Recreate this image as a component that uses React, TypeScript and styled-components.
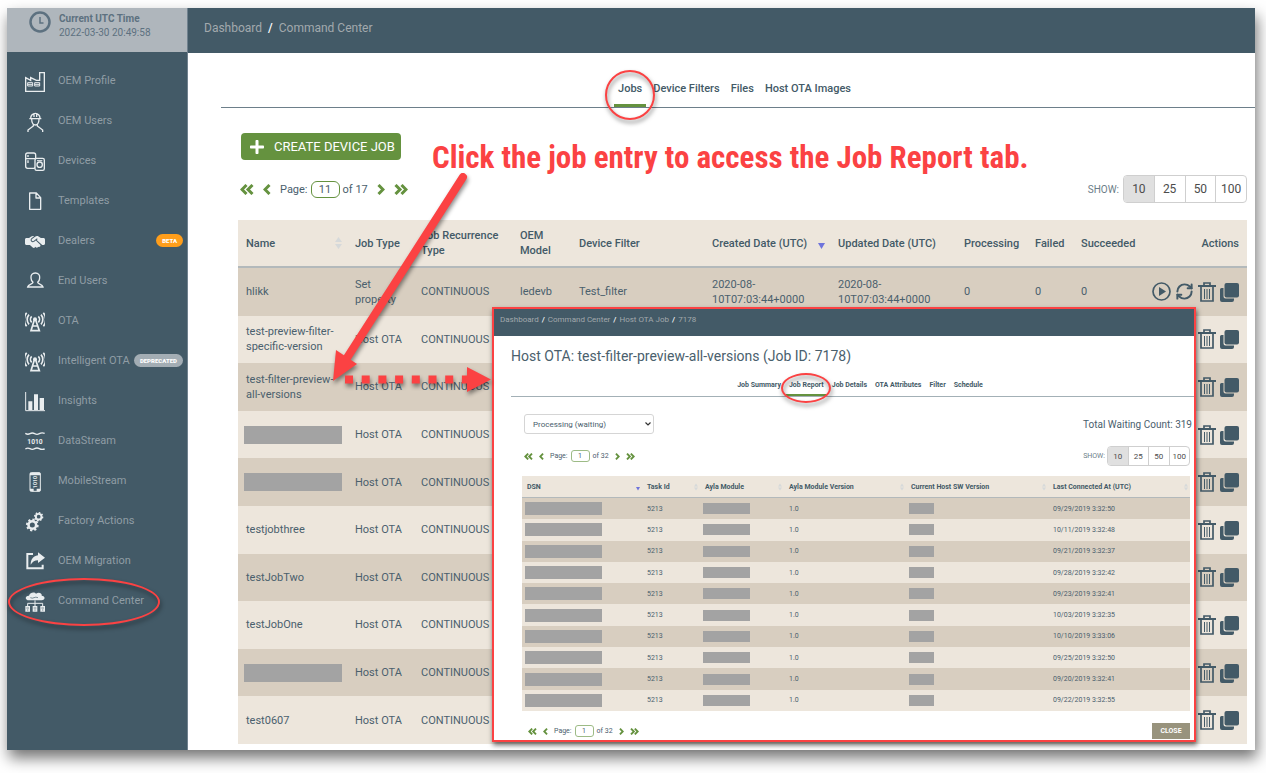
import React from "react";
import styled, { createGlobalStyle, css } from "styled-components";
import { RefreshCw } from "lucide-react";
import { FaPlus } from "react-icons/fa";
import { FaHandshakeSimple } from "react-icons/fa6";

const slate = "#435a67";
const ink = "#4a606d";
const green = "#65923f";
const red = "#fb4243";
const sand = "#ede6dc";
const sandDark = "#d8cec0";
const redacted = "#a3a3a3";

const GlobalStyle = createGlobalStyle`
  *, *::before, *::after { box-sizing: border-box; }
  body {
    margin: 0;
    background: #fff;
    color: ${ink};
    font-family: Roboto, "Liberation Sans", sans-serif;
    font-size: 11px;
    line-height: 15px;
    overflow-x: hidden;
  }
  a { color: inherit; text-decoration: none; }
  button, input, select { font: inherit; color: inherit; margin: 0; }
  button { border: 0; background: none; padding: 0; cursor: pointer; }
  svg { display: block; flex: none; }
`;

const Frame = styled.div`
  position: relative;
  display: flex;
  margin: 8px 11px 23px 7px;
  background: #fff;
  box-shadow: 2px 8px 14px rgba(0, 0, 0, 0.55);
`;

/* ---------- sidebar ---------- */

const Sidebar = styled.aside`
  flex: none;
  width: 181px;
  background: ${slate};
  border-right: 1px solid #71828f;
`;

const Clock = styled.div`
  display: flex;
  gap: 8px;
  height: 44px;
  padding: 3px 0 0 22px;
  background: #afb6bc;
  color: #5d7180;
  font-size: 10px;
  line-height: 14px;
`;

const ClockText = styled.div`
  padding-top: 1px;
`;

const ClockTitle = styled.div`
  font-weight: 700;
`;

const Nav = styled.nav`
  display: flex;
  flex-direction: column;
  padding-top: 8px;
`;

const NavLink = styled.a`
  position: relative;
  display: flex;
  align-items: center;
  height: 40px;
  padding: 0 4px 0 18px;
  color: #909da5;
`;

const NavIcon = styled.span`
  width: 20px;
  margin-right: 13px;
  padding-top: 3px;
  color: #e9edef;
`;

const Badge = styled.span<{ $color: string }>`
  margin-left: auto;
  padding: 0 6px;
  border-radius: 7px;
  background: ${(p) => p.$color};
  color: #fff;
  font-size: 6px;
  font-weight: 900;
  line-height: 13px;
`;

/* ---------- shared pieces ---------- */

const TopBar = styled.header<{ $small?: boolean }>`
  display: flex;
  align-items: ${(p) => (p.$small ? "flex-start" : "center")};
  gap: ${(p) => (p.$small ? 3 : 6)}px;
  height: ${(p) => (p.$small ? 27 : 45)}px;
  padding: ${(p) => (p.$small ? "6px 6px 0" : "0 16px 5px")};
  background: ${slate};
  color: #a2a9ad;
  font-size: ${(p) => (p.$small ? 8 : 12)}px;
  line-height: ${(p) => (p.$small ? 10 : 16)}px;
  i { color: #fff; font-style: normal; font-weight: 500; }
`;

const TabBar = styled.nav<{ $small?: boolean }>`
  display: flex;
  justify-content: center;
  align-items: flex-end;
  gap: ${(p) => (p.$small ? 2 : 3)}px;
  height: ${(p) => (p.$small ? 31 : 55)}px;
  margin-left: ${(p) => (p.$small ? 17 : 33)}px;
  padding: ${(p) => (p.$small ? "0 0 0 15px" : "0 7px 0 0")};
  border-bottom: 1px solid ${(p) => (p.$small ? "#a3b0b6" : "#6d7f8a")};
`;

const Tab = styled.a<{ $small?: boolean; $active?: boolean }>`
  position: relative;
  padding: ${(p) => (p.$small ? "0 3px 4px" : "0 4px 7px")};
  border-bottom: ${(p) => (p.$small ? 2 : 3)}px solid ${(p) => (p.$active ? green : "transparent")};
  color: ${slate};
  font-size: ${(p) => (p.$small ? 7 : 11)}px;
  font-weight: ${(p) => (p.$small ? 700 : 500)};
  line-height: ${(p) => (p.$small ? 10 : 16)}px;
  white-space: nowrap;
`;

const Pager = styled.div<{ $small?: boolean }>`
  display: flex;
  align-items: center;
  gap: ${(p) => (p.$small ? 6 : 9)}px;
  font-size: ${(p) => (p.$small ? 7 : 11)}px;
  color: ${ink};
  button { color: ${green}; }
`;

const PageLabel = styled.label<{ $small?: boolean }>`
  display: flex;
  align-items: center;
  gap: ${(p) => (p.$small ? 3 : 3)}px;
  input {
    width: ${(p) => (p.$small ? 19 : 29)}px;
    height: ${(p) => (p.$small ? 12 : 17)}px;
    padding: 0;
    border: 1px solid ${(p) => (p.$small ? "#9dbb86" : green)};
    border-radius: ${(p) => (p.$small ? 3 : 6)}px;
    background: #fff;
    text-align: center;
    outline: 0;
  }
`;

const SizePicker = styled.div<{ $small?: boolean }>`
  display: flex;
  align-items: center;
  gap: ${(p) => (p.$small ? 2 : 4)}px;
  margin-left: auto;
  font-size: ${(p) => (p.$small ? 7 : 10)}px;
  color: #6b7d88;
`;

const SizeGroup = styled.div<{ $small?: boolean }>`
  display: flex;
  width: ${(p) => (p.$small ? 83 : 124)}px;
  border: 1px solid #cfcfcf;
  border-radius: 4px;
  overflow: hidden;
  button {
    flex: 1;
    height: ${(p) => (p.$small ? 18 : 26)}px;
    font-size: ${(p) => (p.$small ? 8 : 12)}px;
    color: #4c4c4c;
  }
  button + button { border-left: 1px solid #cfcfcf; }
  button[aria-pressed="true"] { background: #e0e0e0; }
`;

const Sheet = styled.table<{ $small?: boolean }>`
  width: 100%;
  height: ${(p) => (p.$small ? 235 : 524)}px;
  table-layout: fixed;
  border-collapse: separate;
  border-spacing: 0;
  font-size: ${(p) => (p.$small ? 7 : 11)}px;
  line-height: ${(p) => (p.$small ? 10 : 15)}px;
  tr { height: ${(p) => (p.$small ? 21 : 47)}px; }
  thead tr { height: ${(p) => (p.$small ? 22 : 48)}px; }
  th, td {
    padding: 0 ${(p) => (p.$small ? 5 : 8)}px;
    text-align: left;
    vertical-align: middle;
  }
  th {
    height: ${(p) => (p.$small ? 22 : 48)}px;
    background: ${sand};
    border-bottom: ${(p) => (p.$small ? 1 : 2)}px solid #b3b9bb;
    color: ${slate};
    font-weight: ${(p) => (p.$small ? 700 : 500)};
  }
  tbody tr { background: ${sand}; }
  tbody tr:nth-child(odd) { background: ${sandDark}; }
`;

const HeadCell = styled.div<{ $end?: boolean }>`
  display: flex;
  align-items: center;
  justify-content: ${(p) => (p.$end ? "flex-end" : "space-between")};
  svg { margin-right: -3px; }
`;

const Redacted = styled.span<{ $w: number; $h: number }>`
  display: block;
  width: ${(p) => p.$w}px;
  height: ${(p) => p.$h}px;
  margin-left: -2px;
  background: ${redacted};
`;

/* ---------- main panel ---------- */

const Main = styled.main`
  flex: 1;
  min-width: 0;
`;

const Content = styled.section`
  display: flex;
  flex-direction: column;
  padding: 25px 8px 6px 50px;
`;

const CreateButton = styled.button`
  display: flex;
  align-items: center;
  gap: 9px;
  align-self: flex-start;
  height: 27px;
  margin-left: 3px;
  padding: 0 6px 0 8px;
  border-radius: 4px;
  background: ${green};
  color: #fff;
  font-size: 13px;
`;

const ControlRow = styled.div`
  display: flex;
  align-items: center;
  margin: 15px 0 17px;
  padding-left: 2px;
`;

const Actions = styled.div`
  display: flex;
  justify-content: flex-end;
  align-items: center;
  gap: 4px;
  color: ${slate};
`;

/* ---------- report window ---------- */

const Report = styled.section`
  position: absolute;
  top: 299px;
  left: 485px;
  right: 59px;
  border: 2px solid ${red};
  background: #fff;
  box-shadow: 1px 3px 5px rgba(0, 0, 0, 0.6);
`;

const ReportTitle = styled.h1`
  margin: 10px 0 0 17px;
  font-size: 14px;
  font-weight: 400;
  line-height: 20px;
`;

const ReportBody = styled.div`
  padding: 17px 4px 1px 28px;
`;

const FilterRow = styled.div`
  display: flex;
  justify-content: space-between;
  align-items: center;
  margin-right: -2px;
  padding-left: 2px;
  font-size: 10px;
`;

const StatusSelect = styled.div`
  position: relative;
  select {
    width: 130px;
    height: 20px;
    padding: 0 8px;
    appearance: none;
    border: 1px solid #d5d5d5;
    border-radius: 3px;
    background: #fff;
    font-size: 8px;
    outline: 0;
  }
  svg {
    position: absolute;
    top: 8px;
    right: 3px;
    pointer-events: none;
  }
`;

const ReportControls = styled.div`
  display: flex;
  align-items: center;
  margin: 12px 0 10px;
  padding-left: 2px;
`;

const ReportFooter = styled.footer`
  display: flex;
  align-items: center;
  justify-content: space-between;
  padding: 12px 0 0 6px;
`;

const CloseButton = styled.button`
  width: 38px;
  height: 16px;
  background: #98937d;
  color: #fff;
  font-size: 7px;
  font-weight: 700;
  line-height: 16px;
`;

/* ---------- annotations ---------- */

const Ring = styled.span<{ $w: number; $h: number; $dx?: number; $dy?: number }>`
  position: absolute;
  z-index: 2;
  top: 50%;
  left: 50%;
  width: ${(p) => p.$w}px;
  height: ${(p) => p.$h}px;
  margin: ${(p) => (p.$dy ?? 0) - p.$h / 2}px 0 0 ${(p) => (p.$dx ?? 0) - p.$w / 2}px;
  border: 2px solid ${red};
  border-radius: 50%;
  pointer-events: none;
  filter: drop-shadow(1px 3px 2px rgba(0, 0, 0, 0.5));
`;

const overlay = css`
  position: absolute;
  pointer-events: none;
`;

const Callout = styled.p`
  ${overlay}
  top: 132px;
  left: 425px;
  margin: 0;
  color: ${red};
  font-family: "Roboto Condensed", "Liberation Sans Narrow", Roboto, sans-serif;
  font-size: 31px;
  font-weight: 700;
  line-height: 36px;
  white-space: nowrap;
`;

const Arrows = styled.svg`
  ${overlay}
  top: 152px;
  left: 313px;
  filter: drop-shadow(1px 3px 2px rgba(0, 0, 0, 0.45));
`;

/* ---------- icons ---------- */

const Glyph = ({ children }: { children: React.ReactNode }) => (
  <svg width="20" height="20" viewBox="0 0 60 60" fill="none" stroke="currentColor" strokeWidth="4" aria-hidden="true">
    {children}
  </svg>
);

const Tower = () => (
  <Glyph>
    <circle cx="30" cy="22" r="6" fill="currentColor" stroke="none" />
    <path
      d="M20 13a13 13 0 0 0 0 18M40 13a13 13 0 0 1 0 18M12 8a22 22 0 0 0 0 29M48 8a22 22 0 0 1 0 29M5 2a32 32 0 0 0 0 41M55 2a32 32 0 0 1 0 41"
      strokeWidth="5"
    />
    <path d="M28 24L18 56H43L32 24M23 42H38" strokeWidth="5" />
  </Glyph>
);

const Gear = ({ x, y, r }: { x: number; y: number; r: number }) => (
  <g transform={`translate(${x} ${y})`}>
    <circle r={r * 0.6} strokeWidth={r * 0.4} />
    {[0, 45, 90, 135, 180, 225, 270, 315].map((a) => (
      <path key={a} d={`M0 ${-r * 0.7}V${-r}`} strokeWidth={r * 0.36} transform={`rotate(${a + 12})`} />
    ))}
  </g>
);

const icons: Record<string, React.ReactNode> = {
  factory: (
    <Glyph>
      <path d="M2 58V17L17 25V17L34 25H44V2H58V58Z" />
      <path d="M8 32H23V42H8ZM29 32H44V42H29ZM8 37H23M29 37H44" strokeWidth="3" />
    </Glyph>
  ),
  worker: (
    <Glyph>
      <path d="M17 19a14 15 0 0 1 28 0M13 20H49M27 5V15M35 5V15M20 22c0 10 5 17 11 17s11-7 11-17" />
      <path d="M25 37V42L9 54V60M37 37V42L53 54V60" />
    </Glyph>
  ),
  devices: (
    <Glyph>
      <rect x="2" y="3" width="30" height="46" rx="6" />
      <path d="M2 20H32M9 9V15M9 25V33" />
      <rect x="30" y="19" width="28" height="36" rx="5" fill={slate} />
      <circle cx="44" cy="38" r="8" />
      <path d="M36 26H52" strokeWidth="3" />
    </Glyph>
  ),
  file: (
    <Glyph>
      <path d="M14 3H34L47 17V52H14ZM33 3V18H47" strokeLinejoin="round" />
    </Glyph>
  ),
  handshake: <FaHandshakeSimple size={20} />,
  person: (
    <Glyph>
      <path d="M31 3c-9 0-14 6-13 15 0 6 3 10 6 13 0 6-14 5-16 14H54c-2-9-16-8-16-14 3-3 6-7 6-13 1-9-4-15-13-15z" />
    </Glyph>
  ),
  tower: <Tower />,
  bars: (
    <Glyph>
      <path d="M2 0V56H60" strokeWidth="3" />
      <path d="M10 28H22V54H10ZM27 7H39V54H27ZM44 18H57V54H44Z" fill="currentColor" stroke="none" />
    </Glyph>
  ),
  stream: (
    <Glyph>
      <path d="M1 4q7 5 14 1t14 0 14 0 16-1M1 51q7-5 14-1t14 0 14 0 16 1" />
      <text x="30" y="35" fontSize="20" fontWeight="700" fill="currentColor" stroke="none" textAnchor="middle">
        1010
      </text>
    </Glyph>
  ),
  mobile: (
    <Glyph>
      <rect x="15" y="2" width="31" height="56" rx="4" strokeWidth="3" />
      <path d="M15 6H46M15 54H26M35 54H46" strokeWidth="7" />
      <text
        x="30"
        y="36"
        fontSize="16"
        fontWeight="700"
        fill="currentColor"
        stroke="none"
        textAnchor="middle"
        transform="rotate(-90 30 30)"
      >
        1010
      </text>
    </Glyph>
  ),
  cogs: (
    <Glyph>
      <Gear x={22} y={39} r={19} />
      <Gear x={41} y={14} r={14} />
    </Glyph>
  ),
  share: (
    <Glyph>
      <path d="M24 6H7V49H53V38" strokeWidth="6" />
      <path d="M60 17L39 1V10C22 12 17 26 17 38 23 29 29 25 39 25V33Z" fill="currentColor" stroke="none" />
    </Glyph>
  ),
  cloud: (
    <Glyph>
      <path
        d="M12 25C-2 24 0 10 12 11 15 0 29-1 33 5 42-1 52 4 50 11 62 12 61 25 50 25Z"
        fill="currentColor"
        stroke="none"
      />
      <path d="M30 25V42M8 42V34H53V42" strokeWidth="3" />
      <path d="M1 42H15V59H1ZM23 42H37V59H23ZM46 42H60V59H46Z" fill="currentColor" stroke="none" />
      <path d="M4 48H12M26 48H34M49 48H57M6 54H10M28 54H32M51 54H55" stroke={slate} strokeWidth="2" />
      <path d="M16 17q6 3 11 0t12 0" stroke={slate} strokeWidth="2" />
    </Glyph>
  ),
};

const Chevron = ({ small, double, next }: { small?: boolean; double?: boolean; next?: boolean }) => {
  const h = small ? 7 : 11;
  const w = Math.round((h * (double ? 14 : 8)) / 11);
  return (
    <svg width={w} height={h} viewBox={`0 0 ${double ? 14 : 8} 11`} fill="none" stroke="currentColor" strokeWidth="3">
      <g transform={next ? `translate(${double ? 14 : 8} 0) scale(-1 1)` : undefined}>
        <path d="M6.500 1L2 5.500L6.500 10" />
        {double && <path d="M12.500 1L8 5.500L12.500 10" />}
      </g>
    </svg>
  );
};

const SortMark = ({ small, active }: { small?: boolean; active?: boolean }) => (
  <svg width={small ? 4 : 7} height={small ? 8 : 12} viewBox="0 0 7 12" overflow="visible">
    {active ? (
      <path d="M0 6H7L3.500 12Z" fill="#6f74dc" />
    ) : (
      <path d="M0 5H7L3.500 0ZM0 7H7L3.500 12Z" fill="#d6d9da" />
    )}
  </svg>
);

const PlayIcon = () => (
  <svg width="19" height="20" viewBox="0 0 19 20" fill="none" stroke="currentColor">
    <circle cx="9.500" cy="9.500" r="8.500" strokeWidth="1.700" />
    <path d="M7 5L14 9.500L7 14Z" fill="currentColor" stroke="none" />
  </svg>
);

const TrashIcon = () => (
  <svg width="18" height="20" viewBox="0 0 18 20" fill="none" stroke="currentColor">
    <path d="M0 4H18" strokeWidth="2" />
    <path d="M6 3V1H12V3M3 5V19H15V5" strokeWidth="1.700" />
    <path d="M6.500 7V17M9 7V17M11.500 7V17" />
  </svg>
);

const CopyIcon = () => (
  <svg width="19" height="20" viewBox="0 0 19 20" fill="currentColor">
    <path d="M3.500 6H1.500Q0 6 0 7.500V18Q0 20 2 20H12Q14 20 14 18V16.500H5.500Q3.500 16.500 3.500 14.500Z" />
    <rect x="4.500" y="1" width="14.500" height="14.500" rx="2" />
  </svg>
);

/* ---------- data ---------- */

const navItems: { label: string; icon: string; badge?: string; color?: string; ring?: boolean }[] = [
  { label: "OEM Profile", icon: "factory" },
  { label: "OEM Users", icon: "worker" },
  { label: "Devices", icon: "devices" },
  { label: "Templates", icon: "file" },
  { label: "Dealers", icon: "handshake", badge: "BETA", color: "#ff9e1b" },
  { label: "End Users", icon: "person" },
  { label: "OTA", icon: "tower" },
  { label: "Intelligent OTA", icon: "tower", badge: "DEPRECATED", color: "#a3adb4" },
  { label: "Insights", icon: "bars" },
  { label: "DataStream", icon: "stream" },
  { label: "MobileStream", icon: "mobile" },
  { label: "Factory Actions", icon: "cogs" },
  { label: "OEM Migration", icon: "share" },
  { label: "Command Center", icon: "cloud", ring: true },
];

const jobColumns: { label: string; width?: number; sort?: "idle" | "active"; end?: boolean }[] = [
  { label: "Name", width: 109, sort: "idle" },
  { label: "Job Type", width: 66 },
  { label: "Job Recurrence Type", width: 99 },
  { label: "OEM Model", width: 59 },
  { label: "Device Filter" },
  { label: "Created Date (UTC)", width: 126, sort: "active" },
  { label: "Updated Date (UTC)", width: 126 },
  { label: "Processing", width: 71 },
  { label: "Failed", width: 46 },
  { label: "Succeeded", width: 70 },
  { label: "Actions", width: 104, end: true },
];

const stamp = "2020-08-10T07:03:44+0000";
const jobs: (string | null)[] = [
  "hlikk",
  "test-preview-filter-specific-version",
  "test-filter-preview-all-versions",
  null,
  null,
  "testjobthree",
  "testJobTwo",
  "testJobOne",
  null,
  "test0607",
];

const reportColumns: { label: string; width?: number; sort: "idle" | "active" }[] = [
  { label: "DSN", width: 120, sort: "active" },
  { label: "Task Id", width: 58, sort: "idle" },
  { label: "Ayla Module", width: 84, sort: "idle" },
  { label: "Ayla Module Version", width: 122, sort: "idle" },
  { label: "Current Host SW Version", width: 142, sort: "idle" },
  { label: "Last Connected At (UTC)", sort: "idle" },
];

const connected = [
  "09/29/2019 3:32:50",
  "10/11/2019 3:32:48",
  "09/21/2019 3:32:37",
  "09/28/2019 3:32:42",
  "09/23/2019 3:32:41",
  "10/03/2019 3:32:35",
  "10/10/2019 3:33:06",
  "09/25/2019 3:32:50",
  "09/20/2019 3:32:41",
  "09/22/2019 3:32:55",
];

/* ---------- composed pieces ---------- */

const Crumbs = ({ items, small }: { items: string[]; small?: boolean }) => (
  <TopBar $small={small}>
    {items.map((item, i) => (
      <React.Fragment key={item}>
        {i > 0 && <i>/</i>}
        <a href="#">{item}</a>
      </React.Fragment>
    ))}
  </TopBar>
);

const PageNav = ({ page, total, small }: { page: number; total: number; small?: boolean }) => (
  <Pager $small={small}>
    <button aria-label="First page"><Chevron small={small} double /></button>
    <button aria-label="Previous page"><Chevron small={small} /></button>
    <PageLabel $small={small}>
      Page:
      <input type="text" defaultValue={page} />
      of {total}
    </PageLabel>
    <button aria-label="Next page"><Chevron small={small} next /></button>
    <button aria-label="Last page"><Chevron small={small} double next /></button>
  </Pager>
);

const PageSize = ({ small }: { small?: boolean }) => (
  <SizePicker $small={small}>
    SHOW:
    <SizeGroup $small={small}>
      {[10, 25, 50, 100].map((n) => (
        <button key={n} aria-pressed={n === 10}>{n}</button>
      ))}
    </SizeGroup>
  </SizePicker>
);

const JobReport = () => (
  <Report>
    <Crumbs small items={["Dashboard", "Command Center", "Host OTA Job", "7178"]} />
    <ReportTitle>Host OTA: test-filter-preview-all-versions (Job ID: 7178)</ReportTitle>
    <TabBar $small>
      {["Job Summary", "Job Report", "Job Details", "OTA Attributes", "Filter", "Schedule"].map((t) => (
        <Tab key={t} href="#" $small $active={t === "Job Report"}>
          {t}
          {t === "Job Report" && <Ring $w={50} $h={30} $dy={1} />}
        </Tab>
      ))}
    </TabBar>
    <ReportBody>
      <FilterRow>
        <StatusSelect>
          <select aria-label="Status" defaultValue="waiting">
            <option value="waiting">Processing (waiting)</option>
          </select>
          <svg width="6" height="4" viewBox="0 0 6 4" fill="none" stroke="#333">
            <path d="M0.500 0.500L3 3L5.500 0.500" strokeWidth="1.200" />
          </svg>
        </StatusSelect>
        <span>Total Waiting Count: 319</span>
      </FilterRow>
      <ReportControls>
        <PageNav small page={1} total={32} />
        <PageSize small />
      </ReportControls>
      <Sheet $small>
        <colgroup>
          {reportColumns.map((c) => <col key={c.label} width={c.width} />)}
        </colgroup>
        <thead>
          <tr>
            {reportColumns.map((c) => (
              <th key={c.label}>
                <HeadCell>{c.label}<SortMark small active={c.sort === "active"} /></HeadCell>
              </th>
            ))}
          </tr>
        </thead>
        <tbody>
          {connected.map((date) => (
            <tr key={date}>
              <td><Redacted $w={77} $h={13} /></td>
              <td>5213</td>
              <td><Redacted $w={47} $h={11} /></td>
              <td>1.0</td>
              <td><Redacted $w={25} $h={11} /></td>
              <td>{date}</td>
            </tr>
          ))}
        </tbody>
      </Sheet>
      <ReportFooter>
        <PageNav small page={1} total={32} />
        <CloseButton>CLOSE</CloseButton>
      </ReportFooter>
    </ReportBody>
  </Report>
);

export default function App() {
  return (
    <>
      <GlobalStyle />
      <Frame>
        <Sidebar>
          <Clock>
            <svg width="22" height="22" viewBox="0 0 22 22" fill="none" stroke="currentColor">
              <circle cx="11" cy="11" r="9.500" strokeWidth="2.500" />
              <path d="M11 6V12H14.500" strokeWidth="1.500" />
            </svg>
            <ClockText>
              <ClockTitle>Current UTC Time</ClockTitle>
              2022-03-30 20:49:58
            </ClockText>
          </Clock>
          <Nav>
            {navItems.map((n) => (
              <NavLink key={n.label} href="#">
                <NavIcon>{icons[n.icon]}</NavIcon>
                {n.label}
                {n.badge && <Badge $color={n.color!}>{n.badge}</Badge>}
                {n.ring && <Ring $w={152} $h={48} $dx={-13} $dy={2} />}
              </NavLink>
            ))}
          </Nav>
        </Sidebar>
        <Main>
          <Crumbs items={["Dashboard", "Command Center"]} />
          <TabBar>
            {["Jobs", "Device Filters", "Files", "Host OTA Images"].map((t) => (
              <Tab key={t} href="#" $active={t === "Jobs"}>
                {t}
                {t === "Jobs" && <Ring $w={50} $h={50} $dy={2} />}
              </Tab>
            ))}
          </TabBar>
          <Content>
            <CreateButton>
              <FaPlus size={16} />
              CREATE DEVICE JOB
            </CreateButton>
            <ControlRow>
              <PageNav page={11} total={17} />
              <PageSize />
            </ControlRow>
            <Sheet>
              <colgroup>
                {jobColumns.map((c) => <col key={c.label} width={c.width} />)}
              </colgroup>
              <thead>
                <tr>
                  {jobColumns.map((c) => (
                    <th key={c.label}>
                      <HeadCell $end={c.end}>
                        {c.label}
                        {c.sort && <SortMark active={c.sort === "active"} />}
                      </HeadCell>
                    </th>
                  ))}
                </tr>
              </thead>
              <tbody>
                {jobs.map((name, i) => {
                  const first = i === 0;
                  return (
                    <tr key={i}>
                      <td>{name ?? <Redacted $w={98} $h={18} />}</td>
                      <td>{first ? "Set property" : "Host OTA"}</td>
                      <td>CONTINUOUS</td>
                      <td>{first && "ledevb"}</td>
                      <td>{first && "Test_filter"}</td>
                      <td>{first && stamp}</td>
                      <td>{first && stamp}</td>
                      <td>{first && 0}</td>
                      <td>{first && 0}</td>
                      <td>{first && 0}</td>
                      <td>
                        <Actions>
                          {first && <button aria-label="Run"><PlayIcon /></button>}
                          {first && <button aria-label="Restart"><RefreshCw size={19} strokeWidth={2.5} /></button>}
                          <button aria-label="Delete"><TrashIcon /></button>
                          <button aria-label="Copy"><CopyIcon /></button>
                        </Actions>
                      </td>
                    </tr>
                  );
                })}
              </tbody>
            </Sheet>
          </Content>
        </Main>
        <JobReport />
        <Callout>Click the job entry to access the Job Report tab.</Callout>
        <Arrows width="180" height="250" viewBox="320 160 180 250" fill={red} stroke={red}>
          <path d="M463 177L345 361" strokeWidth="8" strokeLinecap="round" />
          <path d="M333 381L336 350L357 364Z" stroke="none" />
          <path d="M345 379.500H467" strokeWidth="8" strokeDasharray="8 8.700" />
          <path d="M467 367V392L491 379.500Z" stroke="none" />
        </Arrows>
      </Frame>
    </>
  );
}
